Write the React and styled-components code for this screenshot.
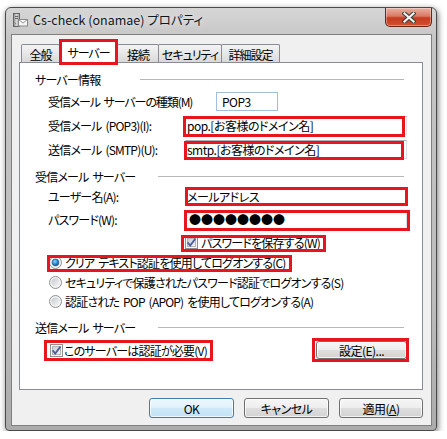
import React from 'react'
import styled, { createGlobalStyle } from 'styled-components'

const GlobalStyle = createGlobalStyle`
  html, body {
    margin: 0;
    padding: 0;
    background: #ffffff;
  }
  body {
    font-family: "Noto Sans CJK JP", "Noto Sans", sans-serif;
    font-size: 12px;
    color: #000;
    font-feature-settings: "palt";
  }
`

const RED = '#e8141e'

// window chrome
const Window = styled.div`
  margin: 7px 0 0 5px;
  width: 432px;
  height: 424px;
  box-sizing: border-box;
  border: 1px solid #4a4a4a;
  border-radius: 6px 6px 4px 4px;
  background: linear-gradient(#d6d6d6, #c6c6c6 30px, #bcbcbc 70%, #acacac);
  box-shadow: 1px 2px 6px rgba(0, 0, 0, 0.55);
  padding: 0 4px 4px 5px;
  display: flex;
  flex-direction: column;
`

const TitleBar = styled.div`
  height: 26px;
  display: flex;
  align-items: flex-start;
`

const TitleIcon = styled.svg`
  margin: 4px 0 0 1px;
  flex: none;
`

const TitleText = styled.div`
  margin: 2px 0 0 5px;
  font-size: 12.5px;
  line-height: 20px;
  color: #101820;
  text-shadow: 0 0 6px rgba(255, 255, 255, 0.9);
  flex: 1;
  white-space: nowrap;
`

const CloseBtn = styled.div`
  width: 47px;
  height: 19px;
  box-sizing: border-box;
  border: 1px solid #6b2317;
  border-top: none;
  border-radius: 0 0 5px 5px;
  background: linear-gradient(#eab0a2 0%, #d97a64 45%, #c53c21 55%, #d2502f 100%);
  box-shadow: inset 0 0 0 1px rgba(255, 255, 255, 0.35);
  display: flex;
  align-items: center;
  justify-content: center;
`

const Body = styled.div`
  flex: 1;
  border: 1px solid #7f7f7f;
  background: #f0f0f0;
  padding: 6px 8px 7px 7px;
  display: flex;
  flex-direction: column;
`

// tabs
const TabStrip = styled.div`
  height: 21px;
  display: flex;
  align-items: flex-end;
  padding-left: 2px;
`

const Tab = styled.div`
  position: relative;
  width: ${p => p.$w}px;
  height: ${p => (p.$active ? 22 : 18)}px;
  margin-left: ${p => (p.$first ? 0 : -1)}px;
  z-index: ${p => (p.$active ? 2 : 1)};
  box-sizing: border-box;
  border: 1px solid #898c95;
  border-bottom: none;
  border-radius: 2px 2px 0 0;
  background: ${p => (p.$active ? '#fff' : 'linear-gradient(#f4f4f4, #e6e6e6 55%, #d9d9d9)')};
  display: flex;
  align-items: center;
  justify-content: center;
  font-size: 12px;
  letter-spacing: -1px;
  white-space: nowrap;
  padding-top: ${p => (p.$active ? 0 : 1)}px;
`

const Panel = styled.div`
  height: 328px;
  box-sizing: border-box;
  border: 1px solid #898c95;
  background: #fff;
  padding-top: 6px;
  display: flex;
  flex-direction: column;
  letter-spacing: -0.8px;
  word-spacing: 2px;
`

// red annotation frame laid over a control
const Mark = styled.div`
  position: relative;
  display: inline-flex;
  align-items: center;
  &::after {
    content: '';
    position: absolute;
    top: ${p => p.$t || 0}px;
    right: ${p => p.$r || 0}px;
    bottom: ${p => p.$b || 0}px;
    left: ${p => p.$l || 0}px;
    border: 3px solid ${RED};
    pointer-events: none;
    z-index: 3;
  }
`

const TabMark = styled(Mark)`
  z-index: 2;
  margin-left: -1px;
  margin-bottom: -1px;
`

const Group = styled.div`
  height: 20px;
  margin-top: ${p => p.$mt || 0}px;
  padding-left: 15px;
  display: flex;
  align-items: center;
`

const GroupLabel = styled.span`
  width: ${p => p.$w}px;
  flex: none;
  white-space: nowrap;
`

const Rule = styled.div`
  flex: 1;
  height: 1px;
  margin: 1px 18px 0 0;
  background: #b8b8b8;
  box-shadow: 0 1px 0 #fff;
`

const Row = styled.div`
  height: ${p => p.$h || 20}px;
  margin-top: ${p => p.$mt || 0}px;
  padding-left: ${p => p.$pl || 28}px;
  padding-right: 15px;
  display: flex;
  align-items: center;
  justify-content: ${p => (p.$spread ? 'space-between' : 'flex-start')};
`

const Label = styled.span`
  width: ${p => p.$w}px;
  flex: none;
  white-space: nowrap;
  letter-spacing: ${p => (p.$tight ? -1.1 : -0.8)}px;
`

const Field = styled.div`
  width: ${p => p.$w}px;
  height: 19px;
  box-sizing: border-box;
  border: 1px solid ${p => (p.$blue ? '#a2bedf' : '#dbdfe6')};
  border-top-color: ${p => (p.$blue ? '#a2bedf' : '#abadb3')};
  background: #fff;
  padding-left: ${p => p.$pad || 1}px;
  display: flex;
  align-items: center;
  white-space: nowrap;
  letter-spacing: ${p => (p.$dots ? 0 : -0.5)}px;
`

const Choice = styled.div`
  display: flex;
  align-items: center;
  gap: ${p => p.$gap || 3}px;
  white-space: nowrap;
  padding-right: 4px;
`

const Button = styled.div`
  width: ${p => p.$w || 85}px;
  height: ${p => p.$h || 20}px;
  box-sizing: border-box;
  border: 1px solid ${p => (p.$default ? '#3c7fb1' : '#707070')};
  border-radius: 3px;
  background: ${p =>
    p.$default
      ? 'linear-gradient(#eef8fe 0%, #e0f1fc 50%, #cfe9f9 50%, #c2e2f6 100%)'
      : 'linear-gradient(#f6f6f6 0%, #ededed 50%, #dedede 50%, #d3d3d3 100%)'};
  box-shadow: inset 0 0 0 1px rgba(255, 255, 255, 0.7);
  display: flex;
  align-items: center;
  justify-content: center;
  font-size: 12px;
  letter-spacing: -0.5px;
`

const Footer = styled.div`
  margin-top: 8px;
  display: flex;
  justify-content: flex-end;
  gap: 10px;
`

const CheckBox = ({ checked }) => (
  <svg width="13" height="13" viewBox="0 0 13 13">
    <defs>
      <linearGradient id="cbIn" x1="0" y1="0" x2="1" y2="1">
        <stop offset="0" stopColor="#c9cdd3" />
        <stop offset="1" stopColor="#f7f7f7" />
      </linearGradient>
    </defs>
    <rect x="0.5" y="0.5" width="12" height="12" fill="#f5f5f5" stroke="#8e8f8f" />
    <rect x="2.5" y="2.5" width="8" height="8" fill="url(#cbIn)" stroke="#b2b6bc" />
    {checked && (
      <path d="M2.6 6.4 L5.2 9.6 L10.4 2.6" fill="none" stroke="#4c5f9f" strokeWidth="1.8" />
    )}
  </svg>
)

const Radio = ({ checked }) => (
  <svg width="13" height="13" viewBox="0 0 13 13">
    <defs>
      <linearGradient id="rdIn" x1="0" y1="0" x2="1" y2="1">
        <stop offset="0" stopColor="#c6c9ce" />
        <stop offset="1" stopColor="#f8f8f8" />
      </linearGradient>
      <radialGradient id="rdDot" cx="0.4" cy="0.35" r="0.7">
        <stop offset="0" stopColor="#8fd3ff" />
        <stop offset="0.5" stopColor="#2e8fd8" />
        <stop offset="1" stopColor="#0d4a86" />
      </radialGradient>
    </defs>
    <circle cx="6.5" cy="6.5" r="6" fill="#f4f4f4" stroke="#8e8f8f" />
    <circle cx="6.5" cy="6.5" r="4.2" fill="url(#rdIn)" />
    {checked && <circle cx="6.5" cy="6.5" r="3.4" fill="url(#rdDot)" stroke="#1d4f82" strokeWidth="0.5" />}
  </svg>
)

const AppIcon = () => (
  <TitleIcon width="16" height="16" viewBox="0 0 16 16">
    <defs>
      <linearGradient id="tower" x1="0" y1="0" x2="1" y2="0">
        <stop offset="0" stopColor="#8c8c8c" />
        <stop offset="0.5" stopColor="#d6d6d6" />
        <stop offset="1" stopColor="#9a9a9a" />
      </linearGradient>
    </defs>
    <rect x="1.5" y="1.5" width="6" height="13" fill="url(#tower)" stroke="#666" />
    <rect x="3" y="4" width="3" height="1" fill="#6a6a6a" />
    <rect x="3" y="6" width="3" height="1" fill="#6a6a6a" />
    <rect x="3" y="11" width="1" height="1" fill="#3ab83a" />
    <rect x="6.5" y="7.5" width="9" height="6.5" fill="#f4f4f4" stroke="#8a8a8a" />
    <path d="M6.8 7.8 L11 11 L15.2 7.8" fill="none" stroke="#9a9a9a" />
  </TitleIcon>
)

const CloseGlyph = () => (
  <svg width="14" height="11" viewBox="0 0 14 11">
    <path d="M2.5 1.5 L11.5 9.5 M11.5 1.5 L2.5 9.5" stroke="#3a3a3a" strokeWidth="4.2" strokeLinecap="square" />
    <path d="M2.5 1.5 L11.5 9.5 M11.5 1.5 L2.5 9.5" stroke="#f2f2f2" strokeWidth="2.2" strokeLinecap="square" />
  </svg>
)

const tabs = [
  { name: '全般', w: 39 },
  { name: 'サーバー', w: 59, active: true },
  { name: '接続', w: 42 },
  { name: 'セキュリティ', w: 64 },
  { name: '詳細設定', w: 59 }
]

const App = () => {
  return (
    <>
      <GlobalStyle />
      <Window>
        <TitleBar>
          <AppIcon />
          <TitleText>Cs-check (onamae) プロパティ</TitleText>
          <CloseBtn>
            <CloseGlyph />
          </CloseBtn>
        </TitleBar>

        <Body>
          <TabStrip>
            {tabs.map((t, i) =>
              t.active ? (
                <TabMark key={t.name} $t={-2} $b={-2}>
                  <Tab $w={t.w} $active $first>
                    {t.name}
                  </Tab>
                </TabMark>
              ) : (
                <Tab key={t.name} $w={t.w} $first={i === 0}>
                  {t.name}
                </Tab>
              )
            )}
          </TabStrip>

          <Panel>
            {/* サーバー情報 */}
            <Group>
              <GroupLabel $w={105}>サーバー情報</GroupLabel>
              <Rule />
            </Group>
            <Row $mt={2}>
              <Label $w={168} $tight>受信メール サーバーの種類(M)</Label>
              <Field $w={62} $blue $pad={5}>POP3</Field>
            </Row>
            <Row $mt={4}>
              <Label $w={137}>受信メール (POP3)(I):</Label>
              <Mark $t={0} $r={2} $b={-2} $l={-2}>
                <Field $w={222}>pop.[お客様のドメイン名]</Field>
              </Mark>
            </Row>
            <Row $mt={4}>
              <Label $w={137}>送信メール (SMTP)(U):</Label>
              <Mark $t={1} $r={3} $b={-1} $l={-1}>
                <Field $w={222}>smtp.[お客様のドメイン名]</Field>
              </Mark>
            </Row>

            {/* 受信メール サーバー */}
            <Group $mt={7}>
              <GroupLabel $w={123}>受信メール サーバー</GroupLabel>
              <Rule />
            </Group>
            <Row>
              <Label $w={137}>ユーザー名(A):</Label>
              <Mark $t={0} $r={-1} $b={0} $l={0}>
                <Field $w={222}>メールアドレス</Field>
              </Mark>
            </Row>
            <Row $mt={3}>
              <Label $w={137}>パスワード(W):</Label>
              <Mark $t={0} $r={-3} $b={-2} $l={-1}>
                <Field $w={222} $pad={3} $dots>●●●●●●●●</Field>
              </Mark>
            </Row>
            <Row $mt={3} $pl={165}>
              <Mark $t={1} $r={-2} $b={-1} $l={-4}>
                <Choice>
                  <CheckBox checked />
                  <span>パスワードを保存する(W)</span>
                </Choice>
              </Mark>
            </Row>
            <Row $mt={1} $h={19} $pl={29}>
              <Mark $t={1} $r={-2} $b={-1} $l={-2}>
                <Choice>
                  <Radio checked />
                  <span>クリア テキスト認証を使用してログオンする(C)</span>
                </Choice>
              </Mark>
            </Row>
            <Row $mt={1} $h={19} $pl={29}>
              <Choice>
                <Radio />
                <span>セキュリティで保護されたパスワード認証でログオンする(S)</span>
              </Choice>
            </Row>
            <Row $h={19} $pl={29}>
              <Choice>
                <Radio />
                <span>認証された POP (APOP) を使用してログオンする(A)</span>
              </Choice>
            </Row>

            {/* 送信メール サーバー */}
            <Group $mt={6}>
              <GroupLabel $w={123}>送信メール サーバー</GroupLabel>
              <Rule />
            </Group>
            <Row $mt={3} $pl={30} $spread>
              <Mark $t={-2} $r={-2} $b={-2} $l={-6}>
                <Choice $gap={1}>
                  <CheckBox checked />
                  <span>このサーバーは認証が必要(V)</span>
                </Choice>
              </Mark>
              <Mark $t={-3} $r={-2} $b={-3} $l={-4}>
                <Button $w={91} $h={18}>設定(E)...</Button>
              </Mark>
            </Row>
          </Panel>

          <Footer>
            <Button $default>OK</Button>
            <Button>キャンセル</Button>
            <Button $w={84}>
              適用(<u>A</u>)
            </Button>
          </Footer>
        </Body>
      </Window>
    </>
  )
}

export default App
